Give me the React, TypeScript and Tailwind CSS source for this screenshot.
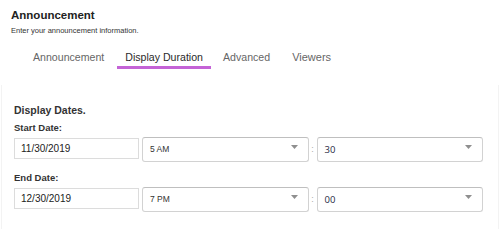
import React from "react";

function Arrow() {
  return (
    <svg width="7" height="4" viewBox="0 0 7 4" className="shrink-0">
      <path d="M0 0 L7 0 L3.5 4 Z" fill="#8f8f8f" />
    </svg>
  );
}

function Select({ value, small }: { value: string; small?: boolean }) {
  return (
    <div className="flex h-[25px] flex-1 items-center justify-between rounded-[3px] border border-[#d2d2d2] border-t-[#bfbfbf] bg-white pl-[7px] pr-[10px]">
      <span
        className={
          small
            ? "text-[8.5px] leading-none text-[#333] font-['Liberation_Sans',Arial,sans-serif]"
            : "text-[9.5px] leading-none text-[#1f2a44] font-['Open_Sans',sans-serif]"
        }
      >
        {value}
      </span>
      <div className="mb-[5px]">
        <Arrow />
      </div>
    </div>
  );
}

function DateRow({ date, hour, minute }: { date: string; hour: string; minute: string }) {
  return (
    <div className="flex items-start">
      <div className="mt-[1px] flex h-[21px] w-[125px] items-center border border-[#dcdcdc] bg-white pl-[6px] text-[10px] text-[#222]">
        {date}
      </div>
      <div className="ml-[3px] flex w-[341px] items-center">
        <Select value={hour} small />
        <span className="w-[8px] text-center text-[9px] leading-none text-[#aaa]">:</span>
        <Select value={minute} />
      </div>
    </div>
  );
}

export default function App() {
  return (
    <div className="h-[229px] w-[500px] overflow-hidden bg-white font-['Liberation_Sans',Arial,sans-serif]">
      <div className="pl-[11px] pt-[8px]">
        <div className="text-[11.5px] font-bold leading-[14px] text-[#222]">Announcement</div>
        <div className="mt-[4px] text-[7.5px] leading-[10px] text-[#333]">Enter your announcement information.</div>
      </div>
      <div className="mt-[14px] flex pl-[25px] text-[10.6px] leading-[14px]">
        <div className="mr-[5px] border-b-[3px] border-transparent px-[8px] pb-[2px] text-[#666]">Announcement</div>
        <div className="mr-[4px] border-b-[3px] border-[#c463d6] px-[8px] pb-[2px] text-[#2a2a2a]">Display Duration</div>
        <div className="mr-[6px] border-b-[3px] border-transparent px-[8px] pb-[2px] text-[#666]">Advanced</div>
        <div className="border-b-[3px] border-transparent px-[8px] pb-[2px] text-[11px] text-[#666]">Viewers</div>
      </div>
      <div className="mx-[1px] mt-[16px] h-[200px] border-x border-[#f3f3f3] pl-[12px] pt-[19px]">
        <div className="text-[10.5px] font-bold leading-[13px] text-[#333]">Display Dates.</div>
        <div className="mt-[5px] text-[9.5px] font-bold leading-[12px] text-[#333]">Start Date:</div>
        <div className="mt-[3px]">
          <DateRow date="11/30/2019" hour="5 AM" minute="30" />
        </div>
        <div className="mt-[10px] text-[9.5px] font-bold leading-[12px] text-[#333]">End Date:</div>
        <div className="mt-[3px]">
          <DateRow date="12/30/2019" hour="7 PM" minute="00" />
        </div>
      </div>
    </div>
  );
}
